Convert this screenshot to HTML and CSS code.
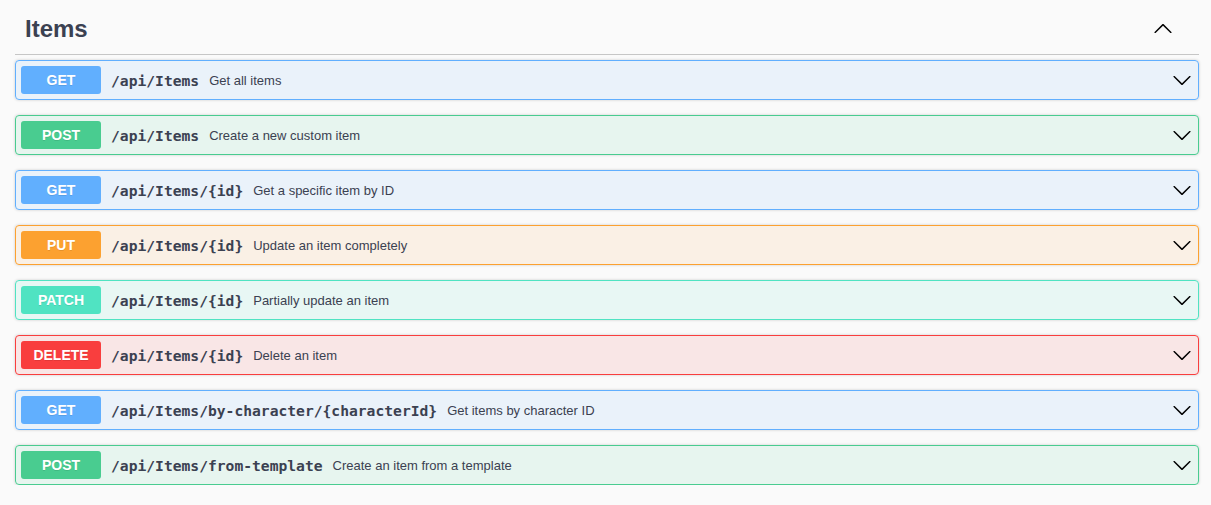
FILE: index.html
```html
<!DOCTYPE html>
<html lang="en">
<head>
<meta charset="utf-8">
<title>Items</title>
<link rel="stylesheet" href="styles.css">
</head>
<body>
<div class="tag-section">
  <h3 class="tag-header">
    <span class="tag-title">Items</span>
    <svg class="arrow" width="20" height="20" viewBox="0 0 20 20"><path d="M2.58 13.89c-.27.27-.71.27-.98 0s-.27-.7 0-.97l7.91-7.83c.27-.27.71-.27.98 0l7.91 7.83c.27.27.27.7 0 .97-.27.27-.71.27-.98 0L10 6.75l-7.42 7.14z"/></svg>
  </h3>
  <div class="ops">
    <div class="opblock get">
      <span class="method">GET</span>
      <span class="path">/api/Items</span>
      <span class="desc">Get all items</span>
      <svg class="arrow" width="20" height="20" viewBox="0 0 20 20"><path d="M17.418 6.109c.272-.268.709-.268.979 0s.271.701 0 .969l-7.908 7.83c-.27.268-.707.268-.979 0l-7.908-7.83c-.27-.268-.27-.701 0-.969.271-.268.709-.268.979 0L10 13.25l7.418-7.141z"/></svg>
    </div>
    <div class="opblock post">
      <span class="method">POST</span>
      <span class="path">/api/Items</span>
      <span class="desc">Create a new custom item</span>
      <svg class="arrow" width="20" height="20" viewBox="0 0 20 20"><path d="M17.418 6.109c.272-.268.709-.268.979 0s.271.701 0 .969l-7.908 7.83c-.27.268-.707.268-.979 0l-7.908-7.83c-.27-.268-.27-.701 0-.969.271-.268.709-.268.979 0L10 13.25l7.418-7.141z"/></svg>
    </div>
    <div class="opblock get">
      <span class="method">GET</span>
      <span class="path">/api/Items/{id}</span>
      <span class="desc">Get a specific item by ID</span>
      <svg class="arrow" width="20" height="20" viewBox="0 0 20 20"><path d="M17.418 6.109c.272-.268.709-.268.979 0s.271.701 0 .969l-7.908 7.83c-.27.268-.707.268-.979 0l-7.908-7.83c-.27-.268-.27-.701 0-.969.271-.268.709-.268.979 0L10 13.25l7.418-7.141z"/></svg>
    </div>
    <div class="opblock put">
      <span class="method">PUT</span>
      <span class="path">/api/Items/{id}</span>
      <span class="desc">Update an item completely</span>
      <svg class="arrow" width="20" height="20" viewBox="0 0 20 20"><path d="M17.418 6.109c.272-.268.709-.268.979 0s.271.701 0 .969l-7.908 7.83c-.27.268-.707.268-.979 0l-7.908-7.83c-.27-.268-.27-.701 0-.969.271-.268.709-.268.979 0L10 13.25l7.418-7.141z"/></svg>
    </div>
    <div class="opblock patch">
      <span class="method">PATCH</span>
      <span class="path">/api/Items/{id}</span>
      <span class="desc">Partially update an item</span>
      <svg class="arrow" width="20" height="20" viewBox="0 0 20 20"><path d="M17.418 6.109c.272-.268.709-.268.979 0s.271.701 0 .969l-7.908 7.83c-.27.268-.707.268-.979 0l-7.908-7.83c-.27-.268-.27-.701 0-.969.271-.268.709-.268.979 0L10 13.25l7.418-7.141z"/></svg>
    </div>
    <div class="opblock delete">
      <span class="method">DELETE</span>
      <span class="path">/api/Items/{id}</span>
      <span class="desc">Delete an item</span>
      <svg class="arrow" width="20" height="20" viewBox="0 0 20 20"><path d="M17.418 6.109c.272-.268.709-.268.979 0s.271.701 0 .969l-7.908 7.83c-.27.268-.707.268-.979 0l-7.908-7.83c-.27-.268-.27-.701 0-.969.271-.268.709-.268.979 0L10 13.25l7.418-7.141z"/></svg>
    </div>
    <div class="opblock get">
      <span class="method">GET</span>
      <span class="path">/api/Items/by-character/{characterId}</span>
      <span class="desc">Get items by character ID</span>
      <svg class="arrow" width="20" height="20" viewBox="0 0 20 20"><path d="M17.418 6.109c.272-.268.709-.268.979 0s.271.701 0 .969l-7.908 7.83c-.27.268-.707.268-.979 0l-7.908-7.83c-.27-.268-.27-.701 0-.969.271-.268.709-.268.979 0L10 13.25l7.418-7.141z"/></svg>
    </div>
    <div class="opblock post">
      <span class="method">POST</span>
      <span class="path">/api/Items/from-template</span>
      <span class="desc">Create an item from a template</span>
      <svg class="arrow" width="20" height="20" viewBox="0 0 20 20"><path d="M17.418 6.109c.272-.268.709-.268.979 0s.271.701 0 .969l-7.908 7.83c-.27.268-.707.268-.979 0l-7.908-7.83c-.27-.268-.27-.701 0-.969.271-.268.709-.268.979 0L10 13.25l7.418-7.141z"/></svg>
    </div>
  </div>
</div>
</body>
</html>
```

FILE: styles.css
```css
html, body {
  margin: 0;
  padding: 0;
  background: #fafafa;
  font-family: "Liberation Sans", Arial, sans-serif;
  color: #3b4151;
}

.tag-section {
  padding: 0 12px 0 15px;
}

.tag-header {
  margin: 0 0 5px;
  padding: 4px 26px 0 10px;
  box-sizing: border-box;
  height: 55px;
  border-bottom: 1px solid #c6c6c6;
  display: flex;
  align-items: center;
  justify-content: space-between;
  font-size: 24px;
  font-weight: 700;
  color: #3b4151;
}

.arrow {
  flex: none;
  fill: #000;
}

.ops {
  display: flex;
  flex-direction: column;
  gap: 15px;
}

.opblock {
  display: flex;
  align-items: center;
  height: 40px;
  box-sizing: border-box;
  padding: 5px 6px 5px 5px;
  border: 1px solid;
  border-radius: 4px;
  box-shadow: 0 0 3px rgba(0, 0, 0, 0.19);
}

.method {
  flex: none;
  width: 80px;
  height: 28px;
  display: flex;
  align-items: center;
  justify-content: center;
  border-radius: 3px;
  color: #fff;
  font-size: 14px;
  font-weight: 700;
  text-shadow: 0 1px 0 rgba(0, 0, 0, 0.1);
}

.path {
  padding: 0 10px;
  font-family: "DejaVu Sans Mono", monospace;
  font-weight: 700;
  font-size: 14.65px;
  color: #3b4151;
}

.desc {
  flex: 1;
  font-size: 13px;
  color: #3b4151;
}

.get { border-color: #61affe; background: rgba(97, 175, 254, 0.1); }
.get .method { background: #61affe; }
.post { border-color: #49cc90; background: rgba(73, 204, 144, 0.1); }
.post .method { background: #49cc90; }
.put { border-color: #fca130; background: rgba(252, 161, 48, 0.1); }
.put .method { background: #fca130; }
.patch { border-color: #50e3c2; background: rgba(80, 227, 194, 0.1); }
.patch .method { background: #50e3c2; }
.delete { border-color: #f93e3e; background: rgba(249, 62, 62, 0.1); }
.delete .method { background: #f93e3e; }
```
